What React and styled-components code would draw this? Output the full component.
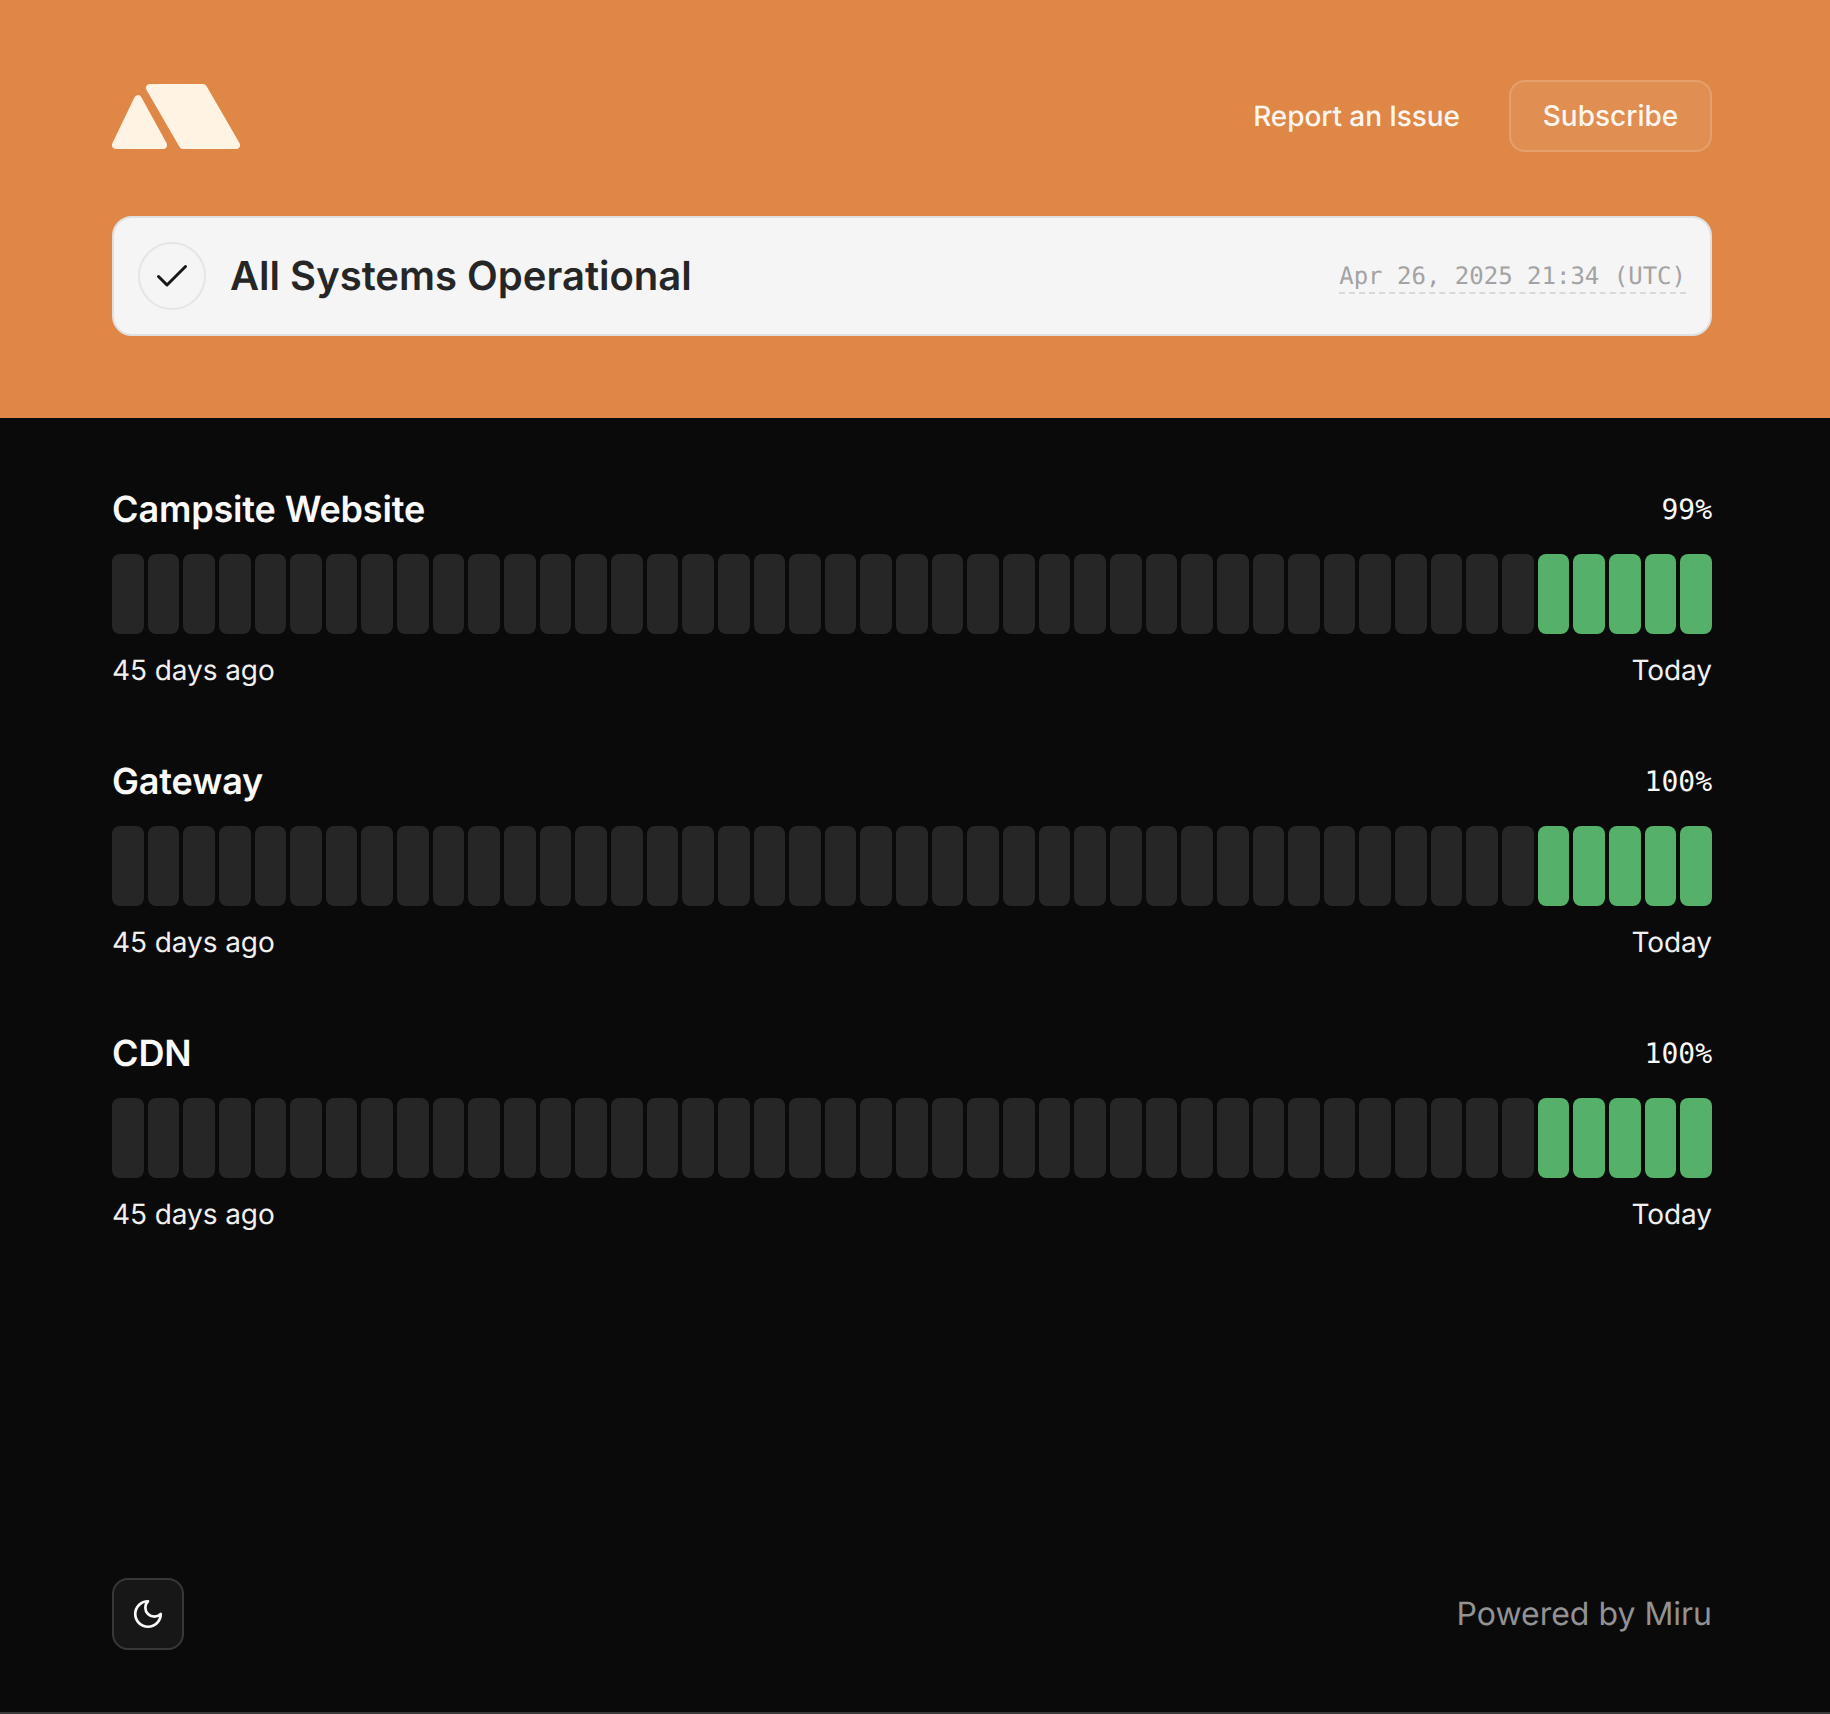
import React from "react";
import styled, { createGlobalStyle } from "styled-components";

const Global = createGlobalStyle`
  html, body { margin: 0; padding: 0; background: #0a0a0a; }
  body { font-family: Inter, "Liberation Sans", sans-serif; text-rendering: geometricPrecision; }
  * { box-sizing: border-box; }
`;

const Page = styled.div`
  height: 1714px;
  display: flex;
  flex-direction: column;
  background: #0a0a0a;
  border-bottom: 2px solid #3a3a3a;
`;
const Hero = styled.header`
  height: 418px;
  flex: none;
  background: #df8747;
  padding: 80px 118px 0 112px;
`;
const TopBar = styled.div`
  display: flex;
  align-items: center;
  justify-content: space-between;
  height: 72px;
  margin-bottom: 64px;
`;
const Nav = styled.nav`
  display: flex;
  align-items: center;
  gap: 49px;
`;
const NavLink = styled.a`
  color: #fdf6ef;
  font-size: 28px;
  font-weight: 500;
  letter-spacing: -0.08px;
`;
const SubscribeButton = styled.button`
  width: 203px;
  height: 72px;
  border-radius: 16px;
  background: rgba(255, 255, 255, 0.06);
  border: 2px solid rgba(255, 255, 255, 0.16);
  color: #fdf6ef;
  font: 500 28px Inter, sans-serif;
  padding: 0;
`;
const StatusCard = styled.div`
  height: 120px;
  display: flex;
  align-items: center;
  justify-content: space-between;
  padding: 0 24px;
  background: #f5f5f5;
  border: 2px solid #e0e0e0;
  border-radius: 20px;
`;
const StatusLeft = styled.div`
  display: flex;
  align-items: center;
  gap: 24px;
`;
const CheckCircle = styled.div`
  width: 68px;
  height: 68px;
  border-radius: 50%;
  border: 2px solid #e5e5e5;
  display: flex;
  align-items: center;
  justify-content: center;
`;
const StatusTitle = styled.h1`
  margin: 0;
  color: #262626;
  font-size: 40px;
  font-weight: 600;
  line-height: 48px;
`;
const Timestamp = styled.span`
  margin-top: 2px;
  font-family: "DejaVu Sans Mono", monospace;
  font-size: 24px;
  line-height: 32px;
  color: #a3a3a3;
  border-bottom: 2px dashed #d9d9d9;
`;
const Services = styled.main`
  flex: 1;
  padding: 64px 118px 0 112px;
  display: flex;
  flex-direction: column;
  gap: 64px;
`;
const Service = styled.section`
  display: flex;
  flex-direction: column;
`;
const ServiceHead = styled.div`
  display: flex;
  align-items: center;
  justify-content: space-between;
  height: 54px;
  margin-bottom: 18px;
`;
const ServiceName = styled.h2`
  margin: 0;
  color: #fafafa;
  font-size: 36px;
  font-weight: 600;
  letter-spacing: -0.15px;
`;
const Percent = styled.span`
  color: #fafafa;
  font-family: "DejaVu Sans Mono", monospace;
  font-size: 28px;
`;
const Bars = styled.div`
  display: flex;
  gap: 4px;
  height: 80px;
`;
const Bar = styled.div`
  flex: 1;
  border-radius: 8px;
  background: ${(p) => (p.$up ? "#55b169" : "#262626")};
`;
const Range = styled.div`
  display: flex;
  justify-content: space-between;
  margin-top: 16px;
  color: #f0f0f0;
  font-size: 28px;
  line-height: 40px;
  letter-spacing: -0.08px;
`;
const Footer = styled.footer`
  display: flex;
  align-items: center;
  justify-content: space-between;
  padding: 0 118px 62px 112px;
`;
const ThemeButton = styled.button`
  width: 72px;
  height: 72px;
  padding: 0;
  display: flex;
  align-items: center;
  justify-content: center;
  color: #fafafa;
  background: #171717;
  border: 2px solid #383838;
  border-radius: 16px;
`;
const Powered = styled.span`
  color: #929292;
  font-size: 32px;
  margin-bottom: 2px;
`;

const Logo = () => (
  <svg width="128" height="65" viewBox="0 0 128 65" fill="#fff3e4" stroke="#fff3e4" strokeWidth="8" strokeLinejoin="round">
    <path d="M26 15.3 L4 61 H51 Z" />
    <path d="M38 4 H91 L124 61 H71 Z" />
  </svg>
);

const CheckIcon = () => (
  <svg width="32" height="24" viewBox="0 0 32 24" fill="none" stroke="#171717" strokeWidth="3" strokeLinecap="round" strokeLinejoin="round">
    <path d="M2.5 12.5 L11 21 L29.5 2.5" />
  </svg>
);

const MoonIcon = () => (
  <svg width="34" height="34" viewBox="0 0 24 24" fill="none" stroke="currentColor" strokeWidth="1.9" strokeLinecap="round" strokeLinejoin="round">
    <path d="M12 3a6 6 0 0 0 9 9 9 9 0 1 1-9-9Z" />
  </svg>
);

const services = [
  ["Campsite Website", "99%"],
  ["Gateway", "100%"],
  ["CDN", "100%"],
];
const bars = Array.from({ length: 45 }, (_, i) => i >= 40);

export default function App() {
  return (
    <Page>
      <Global />
      <Hero>
        <TopBar>
          <Logo />
          <Nav>
            <NavLink>Report an Issue</NavLink>
            <SubscribeButton>Subscribe</SubscribeButton>
          </Nav>
        </TopBar>
        <StatusCard>
          <StatusLeft>
            <CheckCircle>
              <CheckIcon />
            </CheckCircle>
            <StatusTitle>All Systems Operational</StatusTitle>
          </StatusLeft>
          <Timestamp>Apr 26, 2025 21:34 (UTC)</Timestamp>
        </StatusCard>
      </Hero>
      <Services>
        {services.map(([name, pct]) => (
          <Service key={name}>
            <ServiceHead>
              <ServiceName>{name}</ServiceName>
              <Percent>{pct}</Percent>
            </ServiceHead>
            <Bars>
              {bars.map((up, i) => (
                <Bar key={i} $up={up} />
              ))}
            </Bars>
            <Range>
              <span>45 days ago</span>
              <span>Today</span>
            </Range>
          </Service>
        ))}
      </Services>
      <Footer>
        <ThemeButton>
          <MoonIcon />
        </ThemeButton>
        <Powered>Powered by Miru</Powered>
      </Footer>
    </Page>
  );
}
